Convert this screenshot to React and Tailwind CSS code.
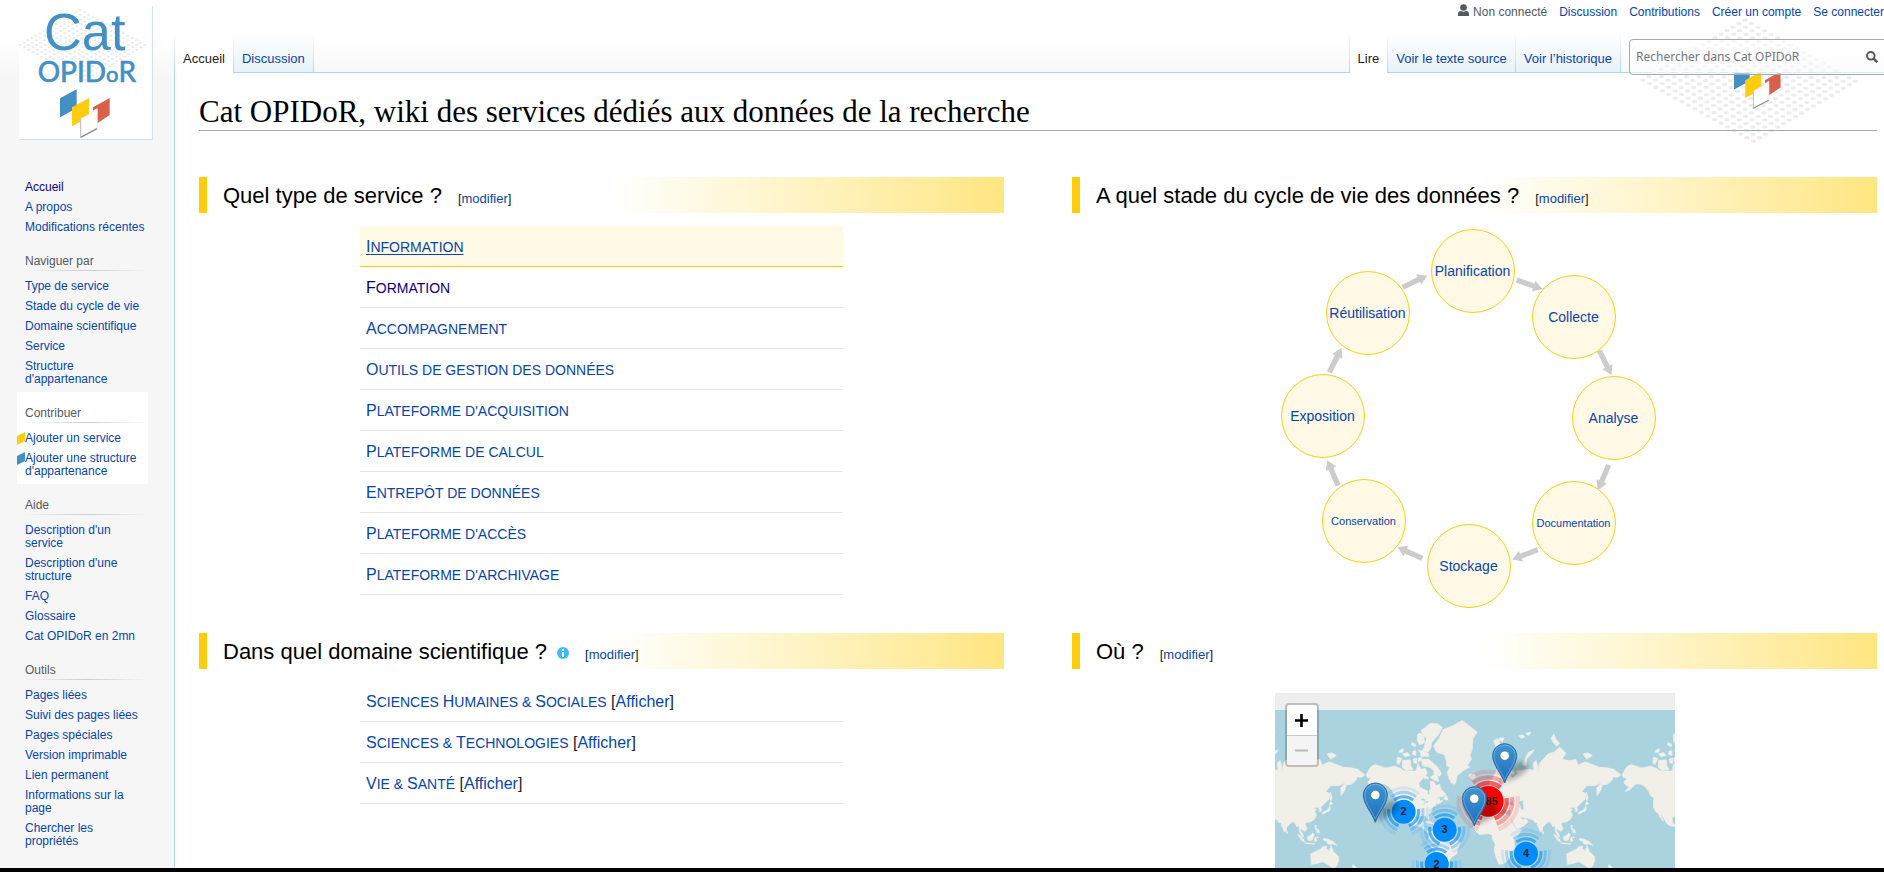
import { Fragment } from 'react';

const navSections = [
    { links: ['Accueil', 'A propos', 'Modifications récentes'] },
    { title: 'Naviguer par', links: ['Type de service', 'Stade du cycle de vie', 'Domaine scientifique', 'Service', "Structure d'appartenance"] },
    { title: 'Contribuer', highlight: true, links: ['Ajouter un service', "Ajouter une structure d'appartenance"] },
    { title: 'Aide', links: ["Description d'un service", "Description d'une structure", 'FAQ', 'Glossaire', 'Cat OPIDoR en 2mn'] },
    { title: 'Outils', links: ['Pages liées', 'Suivi des pages liées', 'Pages spéciales', 'Version imprimable', 'Lien permanent', 'Informations sur la page', 'Chercher les propriétés'] },
];

const bulletColors = ['#ffcd0e', '#4290c5'];

const services = [
    'Information',
    'Formation',
    'Accompagnement',
    'Outils de gestion des données',
    "Plateforme d'acquisition",
    'Plateforme de calcul',
    'Entrepôt de données',
    "Plateforme d'accès",
    "Plateforme d'archivage",
];

const domains = ['Sciences Humaines & Sociales', 'Sciences & Technologies', 'Vie & Santé'];

// Nodes of the life cycle, positioned on a 400x384 canvas
const stages = [
    { label: 'Planification', left: 156, top: 3 },
    { label: 'Collecte', left: 257, top: 49 },
    { label: 'Analyse', left: 297, top: 150 },
    { label: 'Documentation', left: 257, top: 255, small: true },
    { label: 'Stockage', left: 152, top: 298 },
    { label: 'Conservation', left: 47, top: 253, small: true },
    { label: 'Exposition', left: 6, top: 148 },
    { label: 'Réutilisation', left: 51, top: 45 },
];

const arrows = [
    [770, 210, 848, 238],
    [1018, 422, 1055, 496],
    [1046, 765, 1014, 840],
    [833, 1019, 756, 1049],
    [487, 1045, 413, 1012],
    [234, 826, 202, 751],
    [208, 487, 246, 411],
    [428, 232, 502, 196],
];

// Coastlines as lon/lat pairs
const lands = [
    // North America
    [[-168, 66], [-162, 70], [-156, 71.3], [-141, 69.7], [-128, 70.5], [-120, 69.5], [-115, 68.2], [-108, 68.3], [-98, 68], [-95, 71.8], [-91, 69], [-85, 69.5], [-82, 67], [-87, 64.5], [-94, 61], [-93, 58], [-88, 56.5], [-82, 55], [-82, 52.5], [-79, 51.5], [-79, 55], [-77, 57], [-78, 62], [-73, 62], [-70, 59], [-65, 60], [-62, 56], [-56, 52.5], [-60, 50], [-66, 50], [-70, 47.2], [-65, 48.8], [-64, 46], [-60, 46.5], [-66, 43.5], [-70, 43.5], [-70, 41.5], [-74, 40.5], [-76, 37], [-76, 35], [-81, 31.5], [-80, 27], [-80.5, 25.2], [-82.5, 28], [-84, 30], [-89, 30], [-94, 29.5], [-97.5, 27.5], [-97.5, 22], [-95, 18.5], [-91, 18.5], [-90, 21], [-87, 21.5], [-88, 16], [-83.5, 15], [-83.5, 10.5], [-80, 9], [-77.5, 8.5], [-80, 7.5], [-85, 10], [-87.5, 13], [-94, 16], [-101, 17], [-105.5, 20], [-109, 26], [-113, 31], [-114.5, 31], [-112, 27], [-109.5, 23], [-112, 25], [-115, 28.5], [-117, 32.5], [-121, 35], [-124, 40], [-124, 47], [-123, 49], [-128, 51], [-131, 55], [-136, 58.5], [-142, 60], [-148, 60.5], [-152, 59], [-157, 56], [-164, 54.5], [-158, 58.5], [-162, 59], [-166, 61.5], [-161, 64], [-166, 64.5]],
    // Arctic islands
    [[-90, 73.5], [-81, 73.6], [-76, 72.5], [-68, 70.2], [-62, 66.8], [-65, 65], [-68, 66], [-66, 62], [-72, 62.8], [-78, 64.5], [-73, 66], [-73, 68.5], [-79, 70], [-89, 70.8]],
    [[-117, 73], [-106, 73.3], [-105, 70.5], [-102, 69], [-113, 68.7], [-117, 70]],
    [[-125, 72], [-124, 74.3], [-118, 73.8], [-122, 71.3]],
    [[-102, 73.5], [-97, 74], [-97, 71.8], [-101, 72]],
    [[-95, 74], [-90, 74.3], [-91, 73], [-95, 72.5]],
    [[-117, 75.5], [-110, 76], [-106, 75], [-113, 74.5]],
    [[-102, 76.5], [-98, 76.6], [-98, 75], [-103, 75.3]],
    [[-122, 76.5], [-116, 77.3], [-116, 76.2], [-121, 75.9]],
    [[-95, 76.8], [-90, 76.5], [-80, 75.7], [-80, 74.6], [-91, 74.7], [-92, 76.3]],
    [[-104, 79], [-99, 78.6], [-99, 77.9], [-104, 78.3]],
    [[-96, 81], [-92, 81.3], [-87, 80.4], [-86, 79], [-93, 78.4], [-96, 79.5]],
    [[-91, 81.8], [-78, 83.1], [-68, 83.1], [-61, 82.4], [-66, 81], [-76, 79], [-77, 77.5], [-81, 76.2], [-89, 76.5], [-86, 78], [-83, 80.2], [-88, 80.7]],
    [[-86, 66], [-81, 64.5], [-80, 63.7], [-86, 63.8]],
    [[-59.3, 48], [-55.8, 51.5], [-53, 48], [-54, 46.8]],
    // Greenland
    [[-73, 78.2], [-65, 80.2], [-60, 82], [-46, 82.7], [-33, 83.6], [-22, 82.6], [-12, 81.5], [-18, 80], [-19, 77], [-22, 75], [-20, 73.5], [-26, 70.8], [-22, 70.2], [-32, 68.2], [-40, 65.5], [-42, 61.5], [-44, 60], [-48.5, 61.3], [-52, 64.3], [-54, 67.3], [-51, 69.8], [-55, 70.8], [-55, 72.5], [-58, 75.3], [-68, 76], [-71, 77]],
    // South America
    [[-77.5, 8.5], [-72, 12], [-62, 10.5], [-51, 4], [-50, 0], [-44, -2.5], [-35, -6], [-39, -14], [-41, -22], [-48, -26], [-54, -34], [-58, -37], [-62, -40], [-67, -46], [-69, -52], [-74, -52], [-73.5, -40], [-71, -30], [-70, -18], [-76, -14], [-81, -5], [-80, 1], [-77, 6]],
    [[-85, 22], [-80, 23], [-74, 20.2], [-78, 20]],
    [[-74, 19.8], [-68.5, 18.6], [-72, 17.9]],
    // Iceland, British Isles
    [[-24, 65.5], [-22, 66.3], [-16, 66.4], [-13.8, 65], [-18.5, 63.5], [-22.5, 64]],
    [[-5, 50], [-3, 53.5], [-5, 55], [-6, 57.5], [-4, 58.6], [-2, 57.5], [-3, 56], [1.5, 52.7], [1, 51]],
    [[-10, 52], [-9.5, 54], [-7, 55.3], [-6, 52.3]],
    // Eurasia
    [[-9, 37], [-9.5, 43], [-2, 43.5], [-1, 46], [-4.5, 48.5], [1.5, 50.5], [4, 52], [8, 54], [8.5, 57], [10.5, 57.5], [10.5, 55], [13, 54.3], [19, 54.5], [21, 57], [24, 57], [24, 59.3], [29, 60], [23, 60], [21, 62.5], [25, 65], [22, 65.7], [18, 62], [17, 60.5], [18.5, 59.5], [16, 56.5], [13, 55.5], [11, 59], [8, 58], [5.5, 59], [5, 62], [10, 64], [14, 67.5], [19, 70], [25, 71], [30, 70], [40, 67.5], [40, 66.3], [33, 66.7], [37, 64], [40, 65], [44, 66.3], [44, 68.5], [54, 68.5], [60, 69], [68, 68.5], [67, 72], [71, 73], [73, 71], [73, 67.5], [76, 72], [81, 73.5], [88, 75.5], [97, 76.3], [104, 77.7], [113, 75.8], [107, 73.5], [118, 73], [127, 73.5], [130, 71], [140, 72.5], [150, 71.3], [160, 70], [170, 69.8], [180, 69], [190, 66], [185, 64.5], [180, 65], [177, 62.5], [171, 60], [164, 59.8], [162, 56], [157, 51], [156, 57], [163, 61.5], [155, 59.2], [142, 59], [135, 54.5], [141, 53], [140, 48], [133, 43], [128, 40], [129.5, 36], [126.5, 34.5], [126, 37.5], [125, 39.8], [121, 39], [118, 39], [122, 37], [119.5, 35], [122, 31], [120, 26], [114, 22.3], [108, 21.5], [106, 19], [109, 13], [107, 10.5], [105, 9], [101, 13], [99.5, 10], [103, 5], [104, 1.3], [101, 3], [98.5, 8], [97.5, 16.5], [94, 16], [91, 22.5], [87, 21.5], [80, 15], [80, 11], [77.5, 8], [73, 17], [72.5, 21], [69, 21.5], [66.5, 25], [57, 27], [51, 28], [48, 30], [51, 25], [56, 26], [60, 22.5], [54, 17], [45, 12.8], [43, 14], [39, 21], [35, 28], [34.5, 31.5], [36, 36.5], [28, 36.5], [26.5, 39.5], [29, 41], [35, 42], [41, 41.5], [38, 44.5], [39, 47], [34, 45], [31, 46.5], [28, 43], [28.5, 41.2], [24, 40.5], [23, 37], [20, 39.5], [19, 42], [13.5, 45.5], [13, 44], [18.5, 40], [16, 38], [15, 40.5], [10, 44], [4, 43.5], [0, 39.5], [-2, 36.8], [-5.5, 36]],
    // Svalbard, Franz Josef Land, Novaya Zemlya, Severnaya Zemlya, New Siberian Islands
    [[11, 79.5], [17, 80], [21, 78.5], [17, 76.7], [14, 78]],
    [[19, 80.2], [26, 80.2], [24, 79.3], [19, 79.5]],
    [[47, 80.7], [52, 80.9], [55, 80.4], [50, 80.1]],
    [[57, 81.3], [64, 81.5], [61, 80.8], [58, 80.9]],
    [[52, 71.3], [55, 73.5], [60, 76], [68, 76.9], [66, 76], [58, 73.8], [57, 70.7]],
    [[92, 80.2], [96, 81.1], [99, 79.8], [104, 78.8], [100, 78], [95, 79]],
    [[137, 75.5], [144, 75.9], [150, 75], [142, 73.5]],
    // Japan, Sakhalin
    [[142, 54], [144, 49], [142, 46], [141.8, 50]],
    [[140, 43], [142, 45.3], [145, 43.5], [141, 42]],
    [[141, 41.3], [141.5, 38], [140.5, 35.5], [136, 34], [131, 31.5], [130, 33.5], [136, 36], [139.5, 38.5]],
    // South-east Asia
    [[120.5, 18], [122, 18], [121, 14], [125.5, 11], [126, 7], [123, 7.5], [122.5, 11], [120, 14]],
    [[95.5, 5.5], [100, 2.5], [104, -2], [105.5, -6], [101, -3]],
    [[105.5, -6.5], [114, -7.5], [120, -8.5], [114, -8.5], [107, -7.8]],
    [[109, 1.5], [113, 3.5], [117, 7], [119, 5], [117, -1], [115, -4], [110.5, -3]],
    [[119, -1], [120.5, 1], [125, 1.4], [121, 0.2], [123, -4], [121, -3], [120, -5.5]],
    [[131, -1], [135, -1], [138, -1.6], [145, -4.5], [150.5, -10.5], [146, -8.5], [142, -9], [138, -8], [137, -5], [133, -3.5]],
    // Sri Lanka, Madagascar
    [[80, 9.5], [81.8, 7], [80.3, 6]],
    [[49.3, -12], [50.3, -16], [47, -25], [44, -24.5], [44.5, -17]],
    // Africa
    [[-6, 35.8], [10, 37.3], [11, 33.5], [20, 31], [32, 31.3], [34, 28], [37, 21], [43, 12], [51, 12], [44, 2], [40, -4], [40.5, -14], [35, -20], [35.5, -24], [32, -28.5], [26, -34], [18.5, -34.5], [15, -27], [12, -17], [13.5, -9], [9, -1], [9.5, 4], [4, 6.3], [-8, 4.5], [-13, 8.5], [-17.3, 14.5], [-16, 22], [-10, 30]],
    // Australia, New Zealand
    [[114, -22], [122, -18], [129, -15], [131, -12], [136.5, -12], [136, -15], [140, -17.5], [142.5, -11], [146, -19], [153, -25], [153, -31], [150, -37.5], [144, -38.5], [138, -35], [131, -31.5], [124, -33.5], [115, -34.5]],
    [[173, -35], [178, -38], [175, -41.5], [173.5, -39.5]],
];

const lakes = [
    [[47, 45], [52, 46.5], [53, 42], [53.5, 37], [49.5, 37.5], [49, 41]],
    [[-92, 47], [-88, 48.7], [-84, 46.5], [-88, 46.7]],
    [[-87.5, 42], [-86, 45.8], [-80.5, 45.5], [-82.5, 43.5], [-84.5, 45.5], [-86.3, 43]],
];

const WORLD = 768;

function toPoints(ring, shift) {
    return ring
        .map(([lon, lat]) => {
            const x = 674 + (lon * WORLD) / 360 + shift;
            const y = 474 - (WORLD / (2 * Math.PI)) * Math.log(Math.tan(Math.PI / 4 + (lat * Math.PI) / 360));
            return `${x.toFixed(1)},${y.toFixed(1)}`;
        })
        .join(' ');
}

const clusters = [
    { x: 527, y: 552, r: 36, step: 13, label: '2', color: '#008cff' },
    { x: 551, y: 449, r: 36, step: 13, label: '3', color: '#008cff' },
    { x: 428, y: 395, r: 36, step: 13, label: '2', color: '#008cff' },
    { x: 795, y: 521, r: 36, step: 13, label: '4', color: '#008cff' },
    { x: 682, y: 364, r: 46, step: 17, label: '385', color: '#ff0000' },
];

const pins = [
    [343, 427],
    [731, 309],
    [640, 438],
];

function arc(r, middle) {
    const a = ((middle - 40) * Math.PI) / 180;
    const b = ((middle + 40) * Math.PI) / 180;
    return `M${r * Math.cos(a)} ${r * Math.sin(a)}A${r} ${r} 0 0 1 ${r * Math.cos(b)} ${r * Math.sin(b)}`;
}

function Cluster({ x, y, r, step, label, color }) {
    return (
        <g transform={`translate(${x} ${y})`}>
            {[0.6, 0.3, 0.12].map((opacity, ring) => (
                <g key={ring} fill="none" stroke={color} strokeWidth={step - 4} opacity={opacity}>
                    {[-90, 30, 150].map((middle) => (
                        <path key={middle} d={arc(r + 9 + ring * step, middle)} />
                    ))}
                </g>
            ))}
            <circle r={r} fill={color} />
            <text y="11" textAnchor="middle" fontSize="33" fontWeight="bold" fill="#222" fontFamily="Liberation Sans, sans-serif">{label}</text>
        </g>
    );
}

function Pin({ x, y }) {
    return (
        <g transform={`translate(${x} ${y})`}>
            <path d="M0 0L24 -52Q46 -74 68 -58Q76 -40 46 -22Z" fill="#000" opacity="0.28" filter="url(#pin-shadow)" />
            <path d="M0 0C-8 -26 -36 -54 -36 -82A36 36 0 0 1 36 -82C36 -54 8 -26 0 0Z" fill="url(#pin-fill)" stroke="#2e6c97" strokeWidth="3" />
            <path d="M0 -10C-9 -34 -32 -58 -32 -82A32 32 0 0 1 32 -82C32 -58 9 -34 0 -10Z" fill="none" stroke="#fff" strokeOpacity="0.25" strokeWidth="3" />
            <circle cy="-82" r="14" fill="#fff" stroke="#2e6c97" strokeWidth="2" />
        </g>
    );
}

function WorldMap() {
    return (
        <div className="relative mx-auto mt-6 h-[300px] w-[400px] overflow-hidden">
            <svg className="block h-full w-full" viewBox="42 39 1200 900" role="img" aria-label="Carte des services">
                <defs>
                    <linearGradient id="pin-fill" x1="0" y1="0" x2="0" y2="1">
                        <stop offset="0" stopColor="#4095d0" />
                        <stop offset="1" stopColor="#1d6fc0" />
                    </linearGradient>
                    <filter id="pin-shadow" x="-50%" y="-50%" width="200%" height="200%">
                        <feGaussianBlur stdDeviation="8" />
                    </filter>
                </defs>
                <rect x="42" y="39" width="1200" height="900" fill="#eee" />
                <rect x="42" y="90" width="1200" height="768" fill="#aad3df" />
                {[-WORLD, 0, WORLD].map((shift) => (
                    <Fragment key={shift}>
                        {lands.map((ring, i) => (
                            <polygon key={i} points={toPoints(ring, shift)} fill="#f2efe9" stroke="#f2efe9" strokeWidth="2" strokeLinejoin="round" />
                        ))}
                        {lakes.map((ring, i) => (
                            <polygon key={i} points={toPoints(ring, shift)} fill="#aad3df" />
                        ))}
                    </Fragment>
                ))}
                {clusters.map((cluster, i) => (
                    <Cluster key={i} {...cluster} />
                ))}
                {pins.map(([x, y]) => (
                    <Pin key={x} x={x} y={y} />
                ))}
            </svg>
            <div className="absolute left-[10px] top-[10px] flex flex-col rounded border-2 border-black/20 bg-clip-padding">
                <button aria-label="Zoom avant" className="flex h-[31px] w-[30px] items-center justify-center rounded-t-sm border-b border-[#ccc] bg-white">
                    <svg className="h-[13px] w-[13px]" viewBox="0 0 13 13" stroke="#000" strokeWidth="2.6"><path d="M0 6.5H13M6.5 0V13" /></svg>
                </button>
                <button aria-label="Zoom arrière" disabled className="flex h-[29px] w-[30px] items-center justify-center rounded-b-sm bg-[#f4f4f4]">
                    <svg className="h-[13px] w-[13px]" viewBox="0 0 13 13" stroke="#bbb" strokeWidth="2"><path d="M0 6.5H13" /></svg>
                </button>
            </div>
        </div>
    );
}

// Isometric field of dots spanned by two step vectors
function DotGrid({ x, y, right, left, count, rx, ry }) {
    const dots = [];
    for (let i = 0; i < count; i++) {
        for (let j = 0; j < count; j++) {
            dots.push(<ellipse key={`${i}-${j}`} cx={x + i * right[0] + j * left[0]} cy={y + i * right[1] + j * left[1]} rx={rx} ry={ry} />);
        }
    }
    return <g fill="#ececec">{dots}</g>;
}

function Tiles() {
    return (
        <>
            <path d="M0 27L50 0V57L0 84Z" fill="#4290c5" />
            <path d="M99 54L149 26V77L112 102V56L99 64Z" fill="#d9614c" />
            <path d="M36 54L87 26V84L36 111Z" fill="#ffcd0e" />
            <path d="M61 89L112 60V118L61 145Z" fill="#fff" />
            <path d="M62 88V144" stroke="#bbb" strokeWidth="3" />
            <path d="M62 144L111 118" stroke="#888" strokeWidth="4" />
            <path d="M62 88L112 60V118" fill="none" stroke="#ddd" strokeWidth="2" />
        </>
    );
}

function Logo() {
    return (
        <a href="#accueil" aria-label="Cat OPIDoR" className="ml-[19px] mt-[6px] block w-[134px] border-b border-r border-[#cfe2ee] bg-white">
            <svg className="block h-[133px] w-[133px] overflow-visible" viewBox="57 18 399 399">
                <DotGrid x={240} y={30} right={[13, 7]} left={[-12, 7]} count={16} rx={5} ry={3} />
                <g fill="#4290c5">
                    <text x="132" y="151" fontSize="157" fontFamily="Liberation Sans, sans-serif">Cat</text>
                    <text x="113" y="246" fontSize="84" stroke="#4290c5" strokeWidth="2" fontFamily="Lato, sans-serif">
                        OPID<tspan fontSize="66">o</tspan>R
                    </text>
                </g>
                <g transform="translate(180 268)"><Tiles /></g>
            </svg>
        </a>
    );
}

function Sidebar() {
    return (
        <aside className="w-[174px] shrink-0">
            <Logo />
            <nav className="mt-[37px] pb-2 text-[12px] leading-[13px]">
                {navSections.map(({ title, highlight, links }, s) => (
                    <div key={s} className={`ml-[17px] w-[131px] pb-[3px] pl-2 ${title ? 'pt-[13px]' : ''} ${highlight ? 'bg-white' : ''}`}>
                        {title && (
                            <>
                                <h3 className="leading-4 text-[#54595d]">{title}</h3>
                                <div className="mb-[5px] mt-px h-px bg-gradient-to-r from-transparent via-[#c8ccd1] to-transparent" />
                            </>
                        )}
                        <ul>
                            {links.map((link, i) => (
                                <li key={link} className="relative pb-[3px] pt-1">
                                    {highlight && (
                                        <svg className="absolute -left-2 top-1 h-[13px] w-2" viewBox="0 0 8 13">
                                            <path d="M0 4L8 0V9L0 13Z" fill={bulletColors[i]} />
                                        </svg>
                                    )}
                                    <a href="#page" className={s === 0 && i === 0 ? 'text-[#0b0080]' : 'text-[#0645ad]'}>{link}</a>
                                </li>
                            ))}
                        </ul>
                    </div>
                ))}
            </nav>
        </aside>
    );
}

function TabDivider() {
    return <span className="w-px bg-gradient-to-b from-white to-[#a7d7f9]" />;
}

function Tab({ active, children }) {
    return (
        <a
            href="#onglet"
            className={`whitespace-nowrap px-2 pt-[18px] text-[13px] leading-4 ${active ? 'bg-white text-[#222]' : 'border-b border-[#a7d7f9] bg-gradient-to-b from-white to-[#e8f2f8] text-[#0645ad]'}`}
        >
            {children}
        </a>
    );
}

function Header() {
    return (
        <header>
            <div className="flex h-[33px] justify-end gap-3 whitespace-nowrap pt-1 text-[12px] leading-4 text-[#0645ad]">
                <span className="flex gap-1 text-[#54595d]">
                    <svg className="h-[14px] w-[11px]" viewBox="0 0 11 14" fill="#54595d">
                        <circle cx="5.5" cy="3.5" r="3.3" />
                        <path d="M0 12V10Q0 7 3 7Q5.500 8.500 8 7Q11 7 11 10V12Z" />
                    </svg>
                    Non connecté
                </span>
                <a href="#discussion">Discussion</a>
                <a href="#contributions">Contributions</a>
                <a href="#compte">Créer un compte</a>
                <a href="#connexion">Se connecter</a>
            </div>
            <div className="flex h-10">
                <TabDivider />
                <Tab active>Accueil</Tab>
                <TabDivider />
                <Tab>Discussion</Tab>
                <TabDivider />
                <div className="flex-1 border-b border-[#a7d7f9]" />
                <TabDivider />
                <Tab active>Lire</Tab>
                <TabDivider />
                <Tab>Voir le texte source</Tab>
                <TabDivider />
                <Tab>Voir l’historique</Tab>
                <TabDivider />
                <form className="-mr-2 border-b border-[#a7d7f9] pl-2 pt-[6px]">
                    <div className="relative z-10 flex h-9 items-center rounded-sm border border-[#a2a9b1] bg-white/50">
                        <input
                            type="search"
                            aria-label="Rechercher dans Cat OPIDoR"
                            placeholder="Rechercher dans Cat OPIDoR"
                            className="w-[236px] bg-transparent pl-[6px] font-['Noto_Sans',sans-serif] text-[12px] outline-none placeholder:text-[#72777d]"
                        />
                        <button type="button" aria-label="Rechercher" className="mr-[13px]">
                            <svg className="h-3 w-3" viewBox="0 0 12 12" fill="none" stroke="#54595d" strokeWidth="2">
                                <circle cx="4.800" cy="4.800" r="3.800" />
                                <path d="M7.500 7.500L11.300 11.300" strokeWidth="2.500" />
                            </svg>
                        </button>
                    </div>
                </form>
            </div>
        </header>
    );
}

function SectionHeader({ children, info }) {
    return (
        <div className="flex h-9 items-baseline border-l-8 border-[#ffcd0e] bg-gradient-to-r from-white from-50% to-[#ffe680] pl-4">
            <h2 className="text-[22px] leading-[38px] text-black">{children}</h2>
            {info && (
                <svg className="ml-[10px] h-3 w-3" viewBox="0 0 12 12">
                    <circle cx="6" cy="6" r="6" fill="#3fbcf8" />
                    <path d="M6 2V4M6 5V10" stroke="#fff" strokeWidth="2" />
                </svg>
            )}
            <span className="ml-4 text-[13px]">[<a href="#modifier" className="text-[#0645ad]">modifier</a>]</span>
        </div>
    );
}

// Capitals at full size, the rest as smaller capitals
function SmallCaps({ text }) {
    return (
        <span className="text-[14px] uppercase">
            {text.split(/([A-Z])/).map((part, i) => (i % 2 ? <span key={i} className="text-[16px]">{part}</span> : part))}
        </span>
    );
}

function ServiceList() {
    return (
        <ul className="mx-auto mt-[13px] w-3/5">
            {services.map((service, i) => (
                <li key={service} className={`h-[41px] border-b pl-[6px] leading-[42px] ${i === 0 ? 'border-[#ffcd0e] bg-[#fff9e6]' : 'border-[#e6e6e6]'}`}>
                    <a href="#service" className={i === 0 ? 'text-[#0645ad] underline underline-offset-2' : i === 1 ? 'text-[#0b0080]' : 'text-[#0645ad]'}>
                        <SmallCaps text={service} />
                    </a>
                </li>
            ))}
        </ul>
    );
}

function DomainList() {
    return (
        <ul className="mx-auto mt-3 w-3/5">
            {domains.map((domain) => (
                <li key={domain} className="h-[41px] border-b border-[#e6e6e6] pl-[6px] text-[16px] leading-[42px]">
                    <a href="#domaine" className="text-[#0645ad]"><SmallCaps text={domain} /></a>{' '}
                    [<button className="text-[#0645ad]">Afficher</button>]
                </li>
            ))}
        </ul>
    );
}

function LifeCycle() {
    return (
        <div className="relative mx-auto mt-[13px] h-[384px] w-[400px]">
            {stages.map(({ label, left, top, small }) => (
                <a
                    key={label}
                    href="#stade"
                    style={{ left, top }}
                    className={`absolute flex h-[84px] w-[84px] items-center justify-center rounded-full border border-[#ffcd0e] bg-[#fff9e6] text-[#0645ad] ${small ? 'text-[11px]' : 'text-[14px]'}`}
                >
                    {label}
                </a>
            ))}
            <svg className="pointer-events-none absolute inset-0 h-full w-full" viewBox="45 48 1200 1152" fill="#ccc">
                {arrows.map(([x1, y1, x2, y2]) => (
                    <path
                        key={x1}
                        d="M0 -8H54V-17L82 0L54 17V8H0Z"
                        transform={`translate(${x1} ${y1}) rotate(${(Math.atan2(y2 - y1, x2 - x1) * 180) / Math.PI})`}
                    />
                ))}
            </svg>
        </div>
    );
}

export default function App() {
    return (
        <div className="flex h-screen flex-col overflow-hidden bg-[#f6f6f6] font-['Liberation_Sans',Arial,sans-serif] text-[#222]">
            <div className="flex min-h-0 flex-1 overflow-hidden bg-[linear-gradient(to_bottom,#fff_50%,#f6f6f6_100%)] bg-[length:100%_80px] bg-no-repeat">
                <Sidebar />
                <div className="relative min-w-0 flex-1">
                    <Header />
                    <main className="relative min-h-full border-l border-[#a7d7f9] bg-white pl-6 pr-[7px]">
                        <svg className="absolute -top-[68px] right-0 h-[150px] w-[274px]" viewBox="0 0 822 450">
                            <DotGrid x={405} y={45} right={[19.5, 10.8]} left={[-18, 10.6]} count={18} rx={8} ry={5} />
                            <svg x="372" y="204" width="150" height="130" viewBox="0 31 160 130" preserveAspectRatio="xMinYMin meet">
                                <Tiles />
                            </svg>
                        </svg>
                        <h1 className="relative h-[58px] border-b border-[#a2a9b1] pt-[21px] font-['Liberation_Serif',serif] text-[31px] leading-9 text-black">
                            Cat OPIDoR, wiki des services dédiés aux données de la recherche
                        </h1>
                        <div className="relative mt-[46px] grid grid-cols-2 gap-x-[68px] gap-y-[23px]">
                            <section>
                                <SectionHeader>Quel type de service ?</SectionHeader>
                                <ServiceList />
                            </section>
                            <section>
                                <SectionHeader>A quel stade du cycle de vie des données ?</SectionHeader>
                                <LifeCycle />
                            </section>
                            <section>
                                <SectionHeader info>Dans quel domaine scientifique ?</SectionHeader>
                                <DomainList />
                            </section>
                            <section>
                                <SectionHeader>Où ?</SectionHeader>
                                <WorldMap />
                            </section>
                        </div>
                    </main>
                </div>
            </div>
            <div className="h-1 shrink-0 bg-black" />
        </div>
    );
}
